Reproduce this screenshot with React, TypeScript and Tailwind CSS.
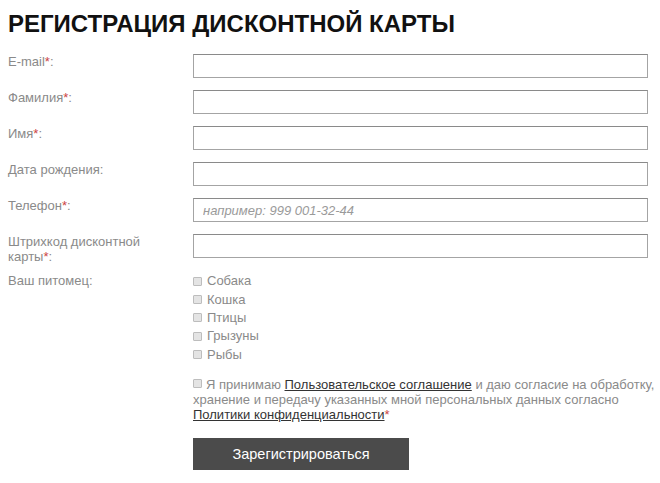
import React from 'react'

const font = { fontFamily: '"Liberation Sans", Arial, sans-serif' }

interface Field {
  label: string
  required?: boolean
  placeholder?: string
}

const fields: Field[] = [
  { label: 'E-mail', required: true },
  { label: 'Фамилия', required: true },
  { label: 'Имя', required: true },
  { label: 'Дата рождения' },
  { label: 'Телефон', required: true, placeholder: 'например: 999 001-32-44' },
  { label: 'Штрихкод дисконтной карты', required: true },
]

const pets = ['Собака', 'Кошка', 'Птицы', 'Грызуны', 'Рыбы']

function Box() {
  return <span className="inline-block w-[9px] h-[9px] border border-[#bdbdbd] bg-[#e4e4e4] rounded-[1px] shrink-0" />
}

export default function App() {
  return (
    <div className="min-h-[483px] bg-white px-2 pt-[10px]" style={font}>
      <h1 className="text-[24px] leading-[28px] font-bold text-[#111]">РЕГИСТРАЦИЯ ДИСКОНТНОЙ КАРТЫ</h1>

      <div className="mt-4 flex flex-col gap-3">
        {fields.map((f) => (
          <div key={f.label} className="flex">
            <label className="w-[185px] pr-11 text-[13px] leading-[15px] text-[#8a8a8a]">
              {f.label}
              {f.required && <span className="text-[#cc4444]">*</span>}:
            </label>
            <input
              type="text"
              placeholder={f.placeholder}
              className="w-[455px] h-[24px] border border-[#a4a4a4] border-t-[#8a8a8a] bg-white px-[9px] text-[13px] italic text-[#333] placeholder:text-[#9a9a9a] outline-none"
            />
          </div>
        ))}
      </div>

      <div className="mt-[8px] flex">
        <div className="w-[185px] pt-[1px] text-[13px] leading-[15px] text-[#8a8a8a]">Ваш питомец:</div>
        <div className="flex flex-col">
          {pets.map((p) => (
            <div key={p} className="flex items-center gap-[5px] h-[18.3px] text-[13px] text-[#8a8a8a]">
              <Box />
              <span>{p}</span>
            </div>
          ))}
        </div>
      </div>

      <div className="ml-[185px] w-[463px] mt-[13px]">
        <p className="text-[13px] leading-[15px] text-[#8a8a8a]">
          <span className="inline-block align-[1px] mr-[4px]"><Box /></span>
          Я принимаю <a className="text-[#333] underline">Пользовательское соглашение</a> и даю согласие на обработку,
          хранение и передачу указанных мной персональных данных согласно{' '}
          <a className="text-[#333] underline">Политики конфиденциальности</a>
          <span className="text-[#cc4444]">*</span>
        </p>
        <button className="mt-[16px] w-[216px] h-[32px] bg-[#4b4b4b] text-white text-[14.5px]">
          Зарегистрироваться
        </button>
      </div>
    </div>
  )
}
